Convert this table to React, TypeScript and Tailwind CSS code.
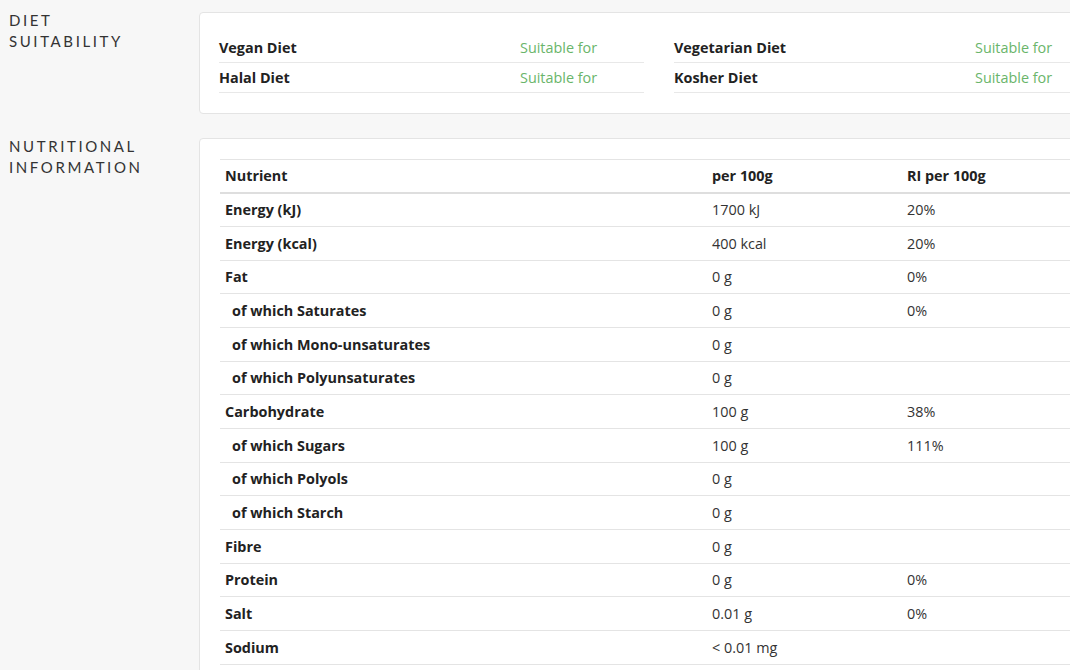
import React from 'react';

interface DietItem {
  name: string;
  value: string;
}

interface NutrientRow {
  name: string;
  per100: string;
  ri: string;
  sub?: boolean;
}

const dietLeft: DietItem[] = [
  { name: 'Vegan Diet', value: 'Suitable for' },
  { name: 'Halal Diet', value: 'Suitable for' },
];

const dietRight: DietItem[] = [
  { name: 'Vegetarian Diet', value: 'Suitable for' },
  { name: 'Kosher Diet', value: 'Suitable for' },
];

const nutrients: NutrientRow[] = [
  { name: 'Energy (kJ)', per100: '1700 kJ', ri: '20%' },
  { name: 'Energy (kcal)', per100: '400 kcal', ri: '20%' },
  { name: 'Fat', per100: '0 g', ri: '0%' },
  { name: 'of which Saturates', per100: '0 g', ri: '0%', sub: true },
  { name: 'of which Mono-unsaturates', per100: '0 g', ri: '', sub: true },
  { name: 'of which Polyunsaturates', per100: '0 g', ri: '', sub: true },
  { name: 'Carbohydrate', per100: '100 g', ri: '38%' },
  { name: 'of which Sugars', per100: '100 g', ri: '111%', sub: true },
  { name: 'of which Polyols', per100: '0 g', ri: '', sub: true },
  { name: 'of which Starch', per100: '0 g', ri: '', sub: true },
  { name: 'Fibre', per100: '0 g', ri: '' },
  { name: 'Protein', per100: '0 g', ri: '0%' },
  { name: 'Salt', per100: '0.01 g', ri: '0%' },
  { name: 'Sodium', per100: '< 0.01 mg', ri: '' },
];

const SectionLabel = ({ lines }: { lines: string[] }) => (
  <div className="w-[199px] shrink-0 pl-[9px] -mt-[2px] font-['Lato',sans-serif] text-[15px] leading-[21px] tracking-[2.6px] text-[#333]">
    {lines.map((l) => (
      <div key={l}>{l}</div>
    ))}
  </div>
);

const DietGroup = ({ items }: { items: DietItem[] }) => (
  <div className="w-[425px]">
    {items.map((item) => (
      <div key={item.name} className="flex h-[30px] items-center border-b border-[#e8e8e8]">
        <div className="w-[301px] font-bold text-[#222]">{item.name}</div>
        <div className="text-[#6ab56a]">{item.value}</div>
      </div>
    ))}
  </div>
);

const App = () => {
  return (
    <div className="min-h-screen w-[1070px] overflow-hidden bg-[#f7f7f7] pt-[12px] font-['Open_Sans',sans-serif] text-[14.4px]">
      {/* Diet suitability */}
      <div className="flex items-start">
        <SectionLabel lines={['DIET', 'SUITABILITY']} />
        <div className="w-[920px] shrink-0 rounded-[4px] border border-[#e4e4e4] bg-white px-[19px] pt-[20px] pb-[20px]">
          <div className="flex gap-[30px]">
            <DietGroup items={dietLeft} />
            <DietGroup items={dietRight} />
          </div>
        </div>
      </div>

      {/* Nutritional information */}
      <div className="mt-[24px] flex items-start">
        <SectionLabel lines={['NUTRITIONAL', 'INFORMATION']} />
        <div className="w-[920px] shrink-0 rounded-[4px] border border-[#e4e4e4] bg-white px-[20px] pt-[20px] pb-[20px]">
          <div className="w-[880px] border-t border-[#e4e4e4]">
            <div className="flex h-[33.5px] items-center border-b-2 border-[#dedede] font-bold text-[#222]">
              <div className="w-[487px] pl-[5px]">Nutrient</div>
              <div className="w-[195px] pl-[5px]">per 100g</div>
              <div className="pl-[5px]">RI per 100g</div>
            </div>
            {nutrients.map((n) => (
              <div key={n.name} className="flex h-[33.67px] items-center border-b border-[#e4e4e4]">
                <div className={`w-[487px] font-bold text-[#222] ${n.sub ? 'pl-[12px]' : 'pl-[5px]'}`}>{n.name}</div>
                <div className="w-[195px] pl-[5px] text-[#333]">{n.per100}</div>
                <div className="pl-[5px] text-[#333]">{n.ri}</div>
              </div>
            ))}
          </div>
        </div>
      </div>
    </div>
  );
};

export default App;
